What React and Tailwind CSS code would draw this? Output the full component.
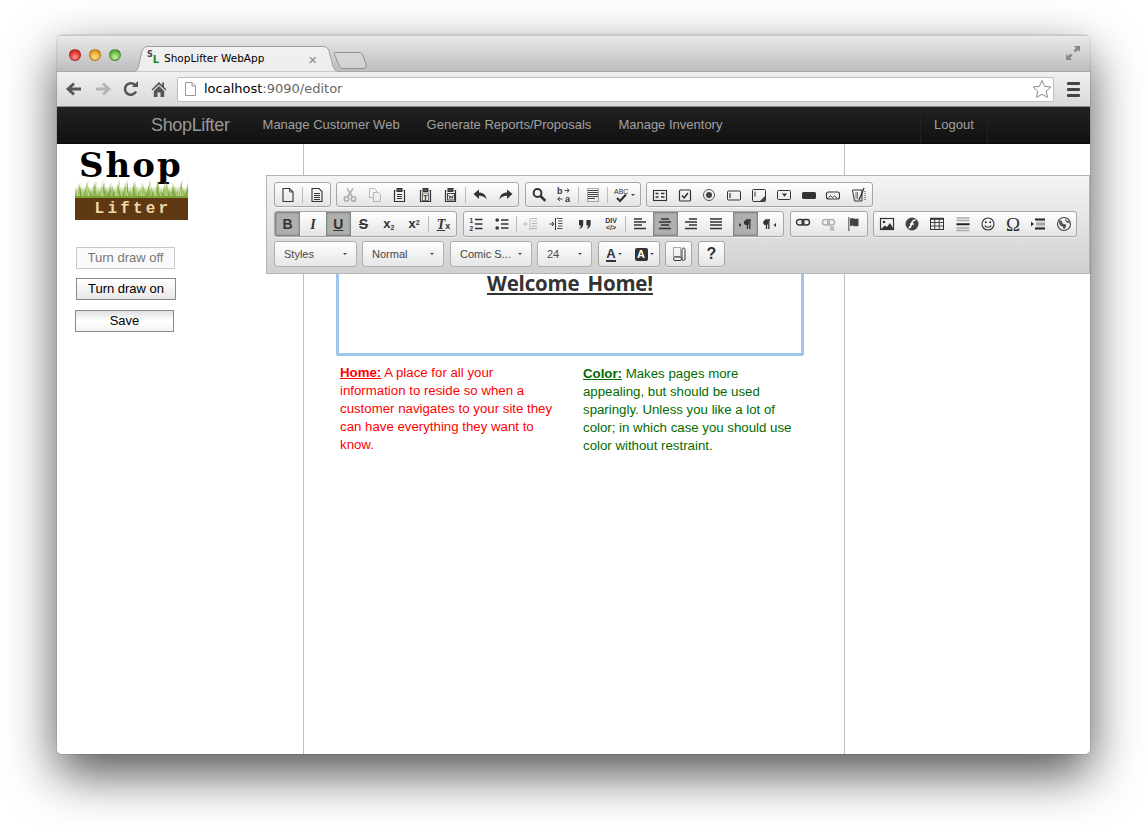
import React from "react";

const I = ({ children, o = 1, w = 16 }) => (
  <svg width={w} height="16" viewBox={`0 0 ${w} 16`} fill="none" stroke="#333" strokeWidth="1" style={{ opacity: o }}>
    {children}
  </svg>
);
const Lines = ({ d, w = 1.4, c = "#333" }) => (
  <path d={d} stroke={c} strokeWidth={w} />
);
const Clip = ({ children }) => (
  <>
    <path d="M3.5 3.5h-1v11h10v-11h-1" strokeWidth="1.2" />
    <rect x="5" y="1.5" width="5" height="3" fill="#555" stroke="#333" />
    {children}
  </>
);
const Arrow = ({ flip }) => (
  <I>
    <path
      d="M1.5 7 L7 2.5 V5.5 C11 5.5 14 7.5 14.5 12.5 C13 9.8 10.5 8.7 7 8.7 V12 Z"
      fill="#333"
      stroke="none"
      transform={flip ? "matrix(-1 0 0 1 16 0)" : undefined}
    />
  </I>
);
const txt = { fontFamily: "'Liberation Sans', sans-serif" };

const icons = {
  newpage: <I><path d="M3 1.5h6.5l3.5 3.5v9.5H3z" strokeWidth="1.1" /><path d="M9.5 1.5V5H13" strokeWidth=".8" /></I>,
  preview: <I><path d="M3 1.5h7l3 3v10H3z" strokeWidth="1.1" /><Lines d="M5 6.5h6M5 8.5h6M5 10.5h6M5 12.5h6" w="1" /></I>,
  cut: <I o={0.35}><circle cx="4.5" cy="12" r="2.2" strokeWidth="1.5" /><circle cx="11.5" cy="12" r="2.2" strokeWidth="1.5" /><path d="M5.5 10L11 1.5M10.5 10L5 1.5" strokeWidth="1.5" /></I>,
  copy: <I o={0.3}><path d="M2.5 1.5h5l2 2v7h-7z" /><path d="M6.5 5.5h5l2 2v7h-7z" fill="#eee" /></I>,
  paste: <I><Clip><Lines d="M5 7.5h5M5 9.5h5M5 11.5h5" w="1.1" /></Clip></I>,
  pastetext: <I><Clip><text x="7.5" y="13" textAnchor="middle" fontSize="8" fontWeight="700" fill="#333" stroke="none" style={txt}>T</text><rect x="4.5" y="6" width="6" height="7.5" strokeWidth=".7" /></Clip></I>,
  pasteword: <I><Clip><rect x="4.5" y="6.5" width="7" height="6.5" strokeWidth=".9" /><path d="M5.8 8l1 3.5 1.2-2.5 1.2 2.5 1-3.5" strokeWidth=".8" /></Clip></I>,
  undo: <Arrow />,
  redo: <Arrow flip />,
  find: <I><circle cx="6.5" cy="6" r="3.9" strokeWidth="2" /><path d="M9.5 9l4.8 4.8" strokeWidth="2.6" /></I>,
  replace: <I><text x="1" y="7" fontSize="9" fontWeight="700" fill="#333" stroke="none" style={txt}>b</text><text x="9" y="14.5" fontSize="9" fontWeight="700" fill="#333" stroke="none" style={txt}>a</text><path d="M8.5 3.5h4.500M11 1.500l2.200 2-2.200 2M1.500 12h5M4 10l-2.200 2 2.200 2" strokeWidth=".9" /></I>,
  selectall: <I><rect x="2.5" y="1.5" width="11" height="13" strokeDasharray="1 1" strokeWidth=".8" /><Lines d="M3 3.5h10M3 5.5h10M3 7.5h10M3 9.5h10M3 11.5h7" w="1.2" c="#444" /></I>,
  spell: (
    <span className="flex items-center gap-[1px]">
      <I><text x="0" y="7" fontSize="7" fill="#333" stroke="none" style={txt}>ABC</text><path d="M3 11l3 3 6-6.5" strokeWidth="2.1" /></I>
      <span className="border-x-[2px] border-t-[2px] border-x-transparent border-t-[#444]" />
    </span>
  ),
  form: <I><rect x="1.5" y="3.5" width="13" height="10" strokeWidth="1.1" /><Lines d="M3.5 6.5h3M9 6.5h3.5M3.5 10h3M9 10h3.5" w="1.6" /></I>,
  checkbox: <I><rect x="2.5" y="3" width="11" height="11" rx="1" strokeWidth="1.2" /><path d="M5 8.5l2.2 2.3L11 6" strokeWidth="1.6" /></I>,
  radio: <I><circle cx="8" cy="8" r="5.5" strokeWidth="1" stroke="#555" /><circle cx="8" cy="8" r="3" fill="#444" stroke="none" /></I>,
  textfield: <I><rect x="1.5" y="4" width="13" height="9" rx="1" /><path d="M4 6v5" strokeWidth="1.2" /></I>,
  textarea: <I><rect x="1.5" y="2.5" width="13" height="12" rx="1" /><path d="M4 4.5v5" /><path d="M14 9v5h-5z" fill="#444" stroke="none" /></I>,
  select: <I><rect x="1.5" y="3.5" width="13" height="9" rx="1" /><path d="M6 6.5h5L8.5 9.8z" fill="#333" stroke="none" /></I>,
  button: <I><rect x="1" y="5" width="14" height="7" rx="1.5" fill="#333" stroke="none" /></I>,
  imagebutton: <I><rect x="1.5" y="5" width="13" height="7" rx="2" strokeWidth="1.1" /><path d="M3.5 11l2-2.5 2 2 2-1.5 2.5 2" strokeWidth=".9" /></I>,
  hidden: <I><path d="M1.5 3h9.5v11H3.500z" strokeWidth="1" /><path d="M5 5v7M6.5 5v7" strokeWidth="1" stroke="#777" /><path d="M8 13l5-12" strokeWidth="1.3" /><path d="M14 4v9" strokeDasharray="1 1" /></I>,
  ol: <I><Lines d="M7 3.500h7.500M7 8h7.500M7 12.500h7.500" w="1.300" /><text x="1.500" y="6.500" fontSize="6.500" fontWeight="700" fill="#333" stroke="none" style={txt}>1</text><text x="1.500" y="14.500" fontSize="6.500" fontWeight="700" fill="#333" stroke="none" style={txt}>2</text></I>,
  ul: <I><Lines d="M7 4h7.500M7 8h7.500M7 12h7.500" w="1.300" /><circle cx="3.200" cy="4" r="1.800" fill="#333" stroke="none" /><circle cx="3.200" cy="12" r="1.800" fill="#333" stroke="none" /></I>,
  outdent: <I o={0.3}><Lines d="M8 2.500h6M9 5h5M9 7.500h5M9 10h5M8 12.500h6M7 2v12" w="1" /><path d="M1 8h4M2.700 6l-2 2 2 2" /></I>,
  indent: <I><Lines d="M9 2.500h5.500M10 5h4.500M10 7.500h4.500M10 10h4.500M9 12.500h5.500" w="1" c="#555" /><path d="M7.500 2v12" /><path d="M1.500 8h4M4 6l2 2-2 2" /></I>,
  quote: <I><path d="M2 4h4.200v4C6.200 10.500 5 12 3 12.800L2.400 12c1-.6 1.500-1.600 1.500-2.600H2zM9.400 4h4.200v4c0 2.500-1.200 4-3.200 4.800L9.800 12c1-.6 1.500-1.600 1.500-2.600H9.400z" fill="#333" stroke="none" /></I>,
  div: <I><text x="8" y="6.800" textAnchor="middle" fontSize="7" fontWeight="700" fill="#333" stroke="none" style={txt}>DIV</text><text x="8" y="14" textAnchor="middle" fontSize="7" fontWeight="700" fill="#333" stroke="none" style={txt}>{"</>"}</text></I>,
  left: <I><Lines d="M2 3h8M2 6h12M2 9h8M2 12.500h12" w="1.600" /></I>,
  center: <I><Lines d="M4 3h8M2 6h12M4 9h8M2 12.500h12" w="1.600" /></I>,
  right: <I><Lines d="M6 3h8M2 6h12M6 9h8M2 12.500h12" w="1.600" /></I>,
  justify: <I><Lines d="M2 3h12M2 6h12M2 9h12M2 12.500h12" w="1.600" /></I>,
  ltr: <I><path d="M2 7l2.500 2L2 11z" fill="#333" stroke="none" /><path d="M9 4h5M10.500 4v9M12.800 4v9" strokeWidth="1.300" /><circle cx="9.500" cy="6.500" r="2.600" fill="#333" stroke="none" /></I>,
  rtl: <I><path d="M14 7l-2.500 2 2.500 2z" fill="#333" stroke="none" /><path d="M3 4h5M4.500 4v9M6.800 4v9" strokeWidth="1.300" /><circle cx="3.800" cy="6.500" r="2.600" fill="#333" stroke="none" /></I>,
  link: <I><rect x="1.500" y="3.500" width="7.500" height="5.500" rx="2.700" strokeWidth="1.400" /><rect x="7" y="3.500" width="7.500" height="5.500" rx="2.700" strokeWidth="1.400" /></I>,
  unlink: <I o={0.35}><rect x="1.500" y="3.500" width="7" height="5.500" rx="2.700" strokeWidth="1.500" /><rect x="6.500" y="3.500" width="7" height="5.500" rx="2.700" strokeWidth="1.500" /><path d="M9 10.500l4 4M13 10.500l-4 4" strokeWidth="1.300" /></I>,
  anchor: <I><path d="M2.800 1v14" strokeWidth="1.400" stroke="#777" /><path d="M4 2.500c3-1 4.500 1 8.500 0v7.500c-4 1-5.500-1-8.500 0z" fill="#444" stroke="none" /></I>,
  image: <I><rect x="1.500" y="2.500" width="13" height="11" strokeWidth="1.200" /><circle cx="5" cy="6" r="1.300" fill="#333" stroke="none" /><path d="M2 13l4-3.500 2 1.500 3-4 3.500 6z" fill="#333" stroke="none" /></I>,
  flash: <I><circle cx="8" cy="8" r="6.500" fill="#444" stroke="none" /><path d="M11.500 4C8.500 4 8 6 7.500 8S6.500 12 4.500 12M6 8h4" stroke="#fff" strokeWidth="1.500" /></I>,
  table: <I><rect x="1.500" y="2.500" width="13" height="11" /><path d="M1.500 2.800h13" strokeWidth="2" /><path d="M1.500 6.500h13M1.500 10h13M5.800 3v10M10.200 3v10" strokeWidth=".9" /></I>,
  hr: <I><Lines d="M1.500 2h13M1.500 4.500h13M1.500 12h13M1.500 14.500h13" w="1.500" c="#aaa" /><Lines d="M1.500 8.200h13" w="2" c="#222" /></I>,
  smiley: <I><circle cx="8" cy="8" r="6" strokeWidth="1.100" /><circle cx="5.800" cy="6.300" r="1" fill="#333" stroke="none" /><circle cx="10.200" cy="6.300" r="1" fill="#333" stroke="none" /><path d="M4.800 9.500c1 2.400 5.400 2.400 6.400 0" strokeWidth="1.100" /></I>,
  pagebreak: <I><path d="M1 5.500l3 2.500-3 2.500z" fill="#333" stroke="none" /><Lines d="M5 3.500h10M5 12.500h10" w="2" c="#222" /><Lines d="M6 8h9" w="1.200" c="#555" /><Lines d="M6 6h9M6 10h9" w=".8" c="#999" /></I>,
  iframe: <I><circle cx="8" cy="8" r="6.500" strokeWidth="1.100" stroke="#444" /><path d="M3.500 4l2.500 1 .500 2.500 3.500 1v2.500l-2 2.500-1.500-3-2.500-1-1-2.500zM10 2.500l.500 2L13 5l.800 2.500-3-1L9 4z" fill="#555" stroke="none" /></I>,
};

const Btn = ({ name, active, w = "w-[25.3px]", children }) => (
  <div
    className={`${w} h-full flex items-center justify-center ${
      active ? "bg-[#aeb0ae] shadow-[inset_0_0_2px_1px_rgba(0,0,0,0.3)]" : ""
    }`}
  >
    {children || icons[name]}
  </div>
);
const Sep = ({ hidden }) => (
  <div className="w-[4px] h-full flex items-center justify-center">
    {!hidden && <div className="w-px h-[16px] bg-[#bcbcbc]" />}
  </div>
);
const groupCls =
  "flex h-full rounded-[3px] border border-[#a6a6a6] bg-gradient-to-b from-white to-[#e4e4e4] overflow-hidden shadow-[0_1px_0_rgba(255,255,255,0.5)]";
const Group = ({ children }) => <div className={groupCls}>{children}</div>;

const Combo = ({ w, label }) => (
  <div className={`${w} h-full flex items-center justify-between pl-[9px] pr-[9px] rounded-[3px] border border-[#b0b0b0] bg-gradient-to-b from-white to-[#e6e6e6] text-[11px] text-[#474747]`}>
    <span>{label}</span>
    <span className="border-x-[2px] border-t-[2px] border-x-transparent border-t-[#444]" />
  </div>
);

const blades = Array.from({ length: 130 }, (_, i) => {
  const x = (i * 113) / 130 + ((i * 7) % 3) - 1;
  const h = 9 + ((i * 37) % 12);
  const lean = ((i * 53) % 9) - 4;
  const color = ["#98b95c", "#b4d07c", "#88aa48", "#c6dd98", "#7da03c"][i % 5];
  return { d: `M${x - 1} 21 Q${x + lean / 3} ${21 - h / 2} ${x + lean} ${21 - h} Q${x + lean / 2 + 0.7} ${21 - h / 2} ${x + 1.2} 21Z`, color };
});

const Logo = () => (
  <div className="relative ml-[18px] w-[113px] h-[76px]">
    <div className="pl-[4px] pt-[4px] text-[34px] leading-[34px] tracking-[2px] font-bold text-black h-[38px]" style={{ fontFamily: "'DejaVu Serif', serif" }}>
      Shop
    </div>
    <svg className="absolute left-0 top-[34px]" width="113" height="21" viewBox="0 0 113 21">
      <defs>
        <linearGradient id="gb" x1="0" y1="0" x2="0" y2="1">
          <stop offset="0" stopColor="#b4d27c" stopOpacity=".2" />
          <stop offset=".6" stopColor="#8fb350" />
          <stop offset="1" stopColor="#6c9a2c" />
        </linearGradient>
      </defs>
      <rect y="9" width="113" height="12" fill="url(#gb)" />
      {blades.map((b, i) => <path key={i} d={b.d} fill={b.color} />)}
      <rect y="18" width="113" height="3" fill="#7aa436" />
    </svg>
    <div className="absolute left-0 right-0 top-[54px] h-[22px] bg-[#5e3913] text-center text-[#f3d7a6] text-[16px] leading-[23px] font-bold tracking-[3.2px] pl-[3px]" style={{ fontFamily: "'Liberation Mono', monospace" }}>
      Lifter
    </div>
  </div>
);

const TabShape = () => (
  <svg width="208" height="26" viewBox="0 0 208 26" className="absolute left-0 top-0">
    <defs>
      <linearGradient id="tg" x1="0" y1="0" x2="0" y2="1">
        <stop offset="0" stopColor="#f1f1f1" />
        <stop offset="1" stopColor="#ececec" />
      </linearGradient>
    </defs>
    <path d="M0 25.500C4 25.500 5 23 6 18L9 5C10 2 12 .500 15 .500H190C193 .500 195 2 196 5L200 20C201 24 203 25.500 208 25.500" fill="url(#tg)" stroke="#9e9e9e" />
  </svg>
);

const Light = ({ cls }) => <div className={`size-[12px] rounded-full border border-black/25 ${cls}`} />;

export default function App() {
  return (
    <div className="w-[1147px] h-[833px] bg-white pl-[57px] pt-[35px] overflow-hidden" style={{ fontFamily: "'Liberation Sans', Arial, sans-serif" }}>
      <div className="relative w-[1033px] h-[719px] rounded-[5px] shadow-[0_20px_50px_rgba(0,0,0,0.68),0_0_1px_rgba(0,0,0,0.8)]">
        <div className="w-full h-full rounded-[5px] overflow-hidden flex flex-col bg-white relative">
          {/* tab strip */}
          <div className="h-[36px] shrink-0 relative bg-gradient-to-b from-[#e9e9e9] to-[#bdbdbd] border-t border-[#c8c8c8] flex">
            <div className="flex items-center gap-[8px] pl-[12px] h-[37px]">
              <Light cls="bg-[radial-gradient(circle_at_50%_70%,#ff9a96,#e5342c_60%,#b0201a)]" />
              <Light cls="bg-[radial-gradient(circle_at_50%_70%,#ffe08a,#eda52b_60%,#b97a14)]" />
              <Light cls="bg-[radial-gradient(circle_at_50%_70%,#c6f0a0,#69b644_60%,#3f8a28)]" />
            </div>
            <svg className="absolute left-[276px] top-[15px]" width="36" height="20" viewBox="0 0 36 20">
              <path d="M2 1.500H26C28 1.500 29 2.500 30 5L33 13C34 16 32.500 17.500 30 17.500H10C8 17.500 7 16.500 6 14L2 5C1 3 1 1.500 2 1.500Z" fill="#dcdcdc" fillOpacity=".6" stroke="#8f8f8f" />
            </svg>
            <div className="absolute left-[76px] top-[10px] w-[208px] h-[26px]">
              <TabShape />
              <div className="relative h-full flex items-center pl-[14px] pr-[24px]">
                <span className="text-[10px] leading-[10px] font-bold w-[16px] flex" style={{ fontFamily: "'DejaVu Sans', sans-serif" }}>
                  <span className="text-[#444] text-[8px] -mt-[3px]">S</span>
                  <span className="text-[#1d8a1d] mt-[2px]">L</span>
                </span>
                <span className="ml-[1px] text-[10.5px] text-black" style={{ fontFamily: "'DejaVu Sans', sans-serif" }}>ShopLifter WebApp</span>
                <span className="ml-auto text-[15px] leading-none text-[#888]">×</span>
              </div>
            </div>
            <svg className="absolute right-[9px] top-[9px]" width="16" height="16" viewBox="0 0 16 16">
              <path d="M9 1h6v6l-2-2-2.500 2.500-2-2L11 3zM7 15H1V9l2 2 2.500-2.500 2 2L5 13z" fill="#888" />
            </svg>
          </div>
          {/* address toolbar */}
          <div className="h-[36px] shrink-0 bg-gradient-to-b from-[#f0f0f0] to-[#d9d9d9] border-t border-[#a8a8a8] border-b border-b-[#8a8a8a] flex items-center pl-[8px] pr-[10px]">
            <svg width="20" height="16" viewBox="0 0 20 16" className="mr-[8px] shrink-0">
              <path d="M16 8H4M9 2.500L3 8l6 5.500" fill="none" stroke="#555" strokeWidth="2.800" />
            </svg>
            <svg width="20" height="16" viewBox="0 0 20 16" className="mr-[9px] shrink-0">
              <path d="M3 8h12M10 2.500L16 8l-6 5.500" fill="none" stroke="#b4b4b4" strokeWidth="2.800" />
            </svg>
            <svg width="18" height="18" viewBox="0 0 18 18" className="mr-[11px] shrink-0">
              <path d="M14 11.500A5.800 5.800 0 1 1 13 5" fill="none" stroke="#555" strokeWidth="2.600" />
              <path d="M10 7h6V1z" fill="#555" />
            </svg>
            <svg width="16" height="18" viewBox="0 0 16 18" className="mr-[10px] shrink-0">
              <path d="M8 2L0.500 9.500l1 1L8 4.500l6.500 6 1-1L13 7V2.500h-1.800v2.700zM2.800 11L8 6l5.200 5v6H9.500v-4.500h-3V17H2.800z" fill="#555" />
            </svg>
            <div className="flex-1 h-[25px] bg-white border border-[#bdbdbd] rounded-[2px] flex items-center pl-[7px] pr-[1px]">
              <svg width="11" height="14" viewBox="0 0 11 14" className="shrink-0">
                <path d="M.500 .500H7L10.500 4V13.500H.500z M7 .500V4H10.500" fill="#fff" stroke="#999" />
              </svg>
              <span className="ml-[8px] text-[13px] text-black" style={{ fontFamily: "'DejaVu Sans', sans-serif" }}>
                localhost<span className="text-[#666]">:9090/editor</span>
              </span>
              <svg width="20" height="20" viewBox="0 0 20 20" className="ml-auto shrink-0">
                <path d="M10 1.500l2.600 5.800 6.300.700-4.700 4.200 1.300 6.200L10 15.300l-5.500 3.100 1.300-6.200L1.100 8l6.300-.700z" fill="#fff" stroke="#888" />
              </svg>
            </div>
            <div className="ml-[13px] flex flex-col gap-[3px] w-[13px] shrink-0">
              <div className="h-[3px] rounded-[1px] bg-[#444]" />
              <div className="h-[3px] rounded-[1px] bg-[#444]" />
              <div className="h-[3px] rounded-[1px] bg-[#444]" />
            </div>
          </div>
          {/* navbar */}
          <div className="h-[37px] shrink-0 bg-gradient-to-b from-[#222] to-[#111] border-b border-[#0a0a0a] flex items-center pl-[94px] pr-[102px] text-[#a0a0a0] text-[13px]">
            <span className="text-[#999] text-[18px] tracking-[-0.35px] mr-[33px]">ShopLifter</span>
            <div className="flex gap-[27px]">
              <span>Manage Customer Web</span>
              <span>Generate Reports/Proposals</span>
              <span>Manage Inventory</span>
            </div>
            <div className="ml-auto h-full w-[68px] flex items-center justify-center border-x border-[#222]">Logout</div>
          </div>
          {/* content */}
          <div className="flex-1 flex min-h-0 bg-white">
            <div className="w-[247px] shrink-0 border-r border-[#bfbfbf]">
              <Logo />
              <div className="flex flex-col text-[13px] text-black mt-[27px]">
                <div className="ml-[19px] w-[99px] h-[22px] border border-[#c8c8c8] bg-[#fafafa] text-[#777] flex items-center justify-center">Turn draw off</div>
                <div className="ml-[19px] mt-[9px] w-[100px] h-[22px] border border-[#8a8a8a] bg-gradient-to-b from-white to-[#e8e8e8] flex items-center justify-center">Turn draw on</div>
                <div className="ml-[18px] mt-[10px] w-[99px] h-[22px] border border-[#8a8a8a] bg-gradient-to-b from-[#e0e0e0] via-white to-[#f4f4f4] flex items-center justify-center">Save</div>
              </div>
            </div>
            <div className="w-[541px] shrink-0 border-r border-[#bfbfbf] pl-[32px]">
              <div className="mt-[36px] w-[468px] h-[176px] border-[3px] border-[#9dc4ea] rounded-[2px] text-center pt-[87px]">
                <span className="text-[20.500px] leading-[26px] font-bold text-[#333] underline tracking-[-0.2px] [word-spacing:3px]" style={{ fontFamily: "'Open Sans', sans-serif" }}>Welcome Home!</span>
              </div>
              <div className="flex text-[13.250px] leading-[18px]">
                <p className="w-[247px] pl-[4px] pr-[25px] mt-[8px] text-[#ff0000]">
                  <b className="underline">Home:</b> A place for all your information to reside so when a customer navigates to your site they can have everything they want to know.
                </p>
                <p className="w-[212px] mt-[9px] text-[#006b00]">
                  <b className="underline">Color:</b> Makes pages more appealing, but should be used sparingly. Unless you like a lot of color; in which case you should use color without restraint.
                </p>
              </div>
            </div>
            <div className="flex-1" />
          </div>
          {/* floating editor toolbar */}
          <div className="absolute left-[209px] top-[140px] right-0 h-[99px] bg-gradient-to-b from-[#f4f4f4] to-[#cfd1cf] border border-[#b4b4b4] pl-[7px] pt-[6px] flex flex-col gap-[4px]">
            <div className="flex gap-[5.600px] h-[25px]">
              <Group><Btn name="newpage" /><Sep /><Btn name="preview" /></Group>
              <Group>
                <Btn name="cut" /><Btn name="copy" /><Btn name="paste" /><Btn name="pastetext" /><Btn name="pasteword" /><Sep /><Btn name="undo" /><Btn name="redo" />
              </Group>
              <Group>
                <Btn name="find" /><Btn name="replace" /><Sep /><Btn name="selectall" /><Sep /><Btn name="spell" w="w-[30px]" />
              </Group>
              <Group>
                <Btn name="form" w="w-[24.800px]" /><Btn name="checkbox" w="w-[24.800px]" /><Btn name="radio" w="w-[24.800px]" /><Btn name="textfield" w="w-[24.800px]" /><Btn name="textarea" w="w-[24.800px]" /><Btn name="select" w="w-[24.800px]" /><Btn name="button" w="w-[24.800px]" /><Btn name="imagebutton" w="w-[24.800px]" /><Btn name="hidden" w="w-[25.800px]" />
              </Group>
            </div>
            <div className="flex gap-[5.500px] h-[26px]">
              <Group>
                <Btn active><span className="text-[14px] font-bold text-[#333]">B</span></Btn>
                <Btn><span className="text-[14px] font-bold italic text-[#333]" style={{ fontFamily: "'Liberation Serif', serif" }}>I</span></Btn>
                <Btn active><span className="text-[14px] font-bold underline text-[#333]">U</span></Btn>
                <Btn><span className="text-[14px] font-bold line-through text-[#333]">S</span></Btn>
                <Btn><span className="text-[13px] font-bold text-[#333]">x<sub className="text-[7px]">2</sub></span></Btn>
                <Btn><span className="text-[13px] font-bold text-[#333]">x<sup className="text-[7px]">2</sup></span></Btn>
                <Sep />
                <Btn><span className="text-[14px] font-bold italic underline text-[#333]" style={{ fontFamily: "'Liberation Serif', serif" }}>T<span className="not-italic text-[9px] inline-block no-underline" style={txt}>x</span></span></Btn>
              </Group>
              <Group>
                <Btn name="ol" /><Btn name="ul" /><Sep /><Btn name="outdent" /><Btn name="indent" /><Sep hidden /><Btn name="quote" /><Btn name="div" /><Sep /><Btn name="left" /><Btn name="center" active /><Btn name="right" /><Btn name="justify" /><Sep hidden /><Btn name="ltr" active /><Btn name="rtl" />
              </Group>
              <Group><Btn name="link" /><Btn name="unlink" /><Btn name="anchor" /></Group>
              <Group>
                <Btn name="image" /><Btn name="flash" /><Btn name="table" /><Btn name="hr" /><Btn name="smiley" />
                <Btn><span className="text-[19px] leading-[19px] text-[#333]" style={{ fontFamily: "'Liberation Serif', serif" }}>Ω</span></Btn>
                <Btn name="pagebreak" /><Btn name="iframe" />
              </Group>
            </div>
            <div className="flex h-[26px]">
              <Combo w="w-[83px]" label="Styles" />
              <div className="w-[5px]" />
              <Combo w="w-[82px]" label="Normal" />
              <div className="w-[6px]" />
              <Combo w="w-[82px]" label="Comic S..." />
              <div className="w-[5px]" />
              <Combo w="w-[55px]" label="24" />
              <div className="w-[6px]" />
              <Group>
                <Btn w="w-[30px]">
                  <span className="flex items-center gap-[2px]">
                    <span className="text-[13px] leading-[13px] font-bold text-[#333] border-b-2 border-[#333]">A</span>
                    <span className="border-x-[2px] border-t-[2px] border-x-transparent border-t-[#444]" />
                  </span>
                </Btn>
                <Btn w="w-[30px]">
                  <span className="flex items-center gap-[2px]">
                    <span className="text-[11px] leading-[13px] w-[13px] text-center font-bold text-white bg-[#333] rounded-[2px]">A</span>
                    <span className="border-x-[2px] border-t-[2px] border-x-transparent border-t-[#444]" />
                  </span>
                </Btn>
              </Group>
              <div className="w-[5px]" />
              <Group>
                <Btn w="w-[25px]">
                  <I><rect x="2.500" y="1.500" width="7" height="9" strokeDasharray="1 1" strokeWidth=".8" /><rect x="2.500" y="11" width="8" height="3.500" rx="1.500" /><rect x="11" y="2" width="3" height="12.500" rx="1.500" /></I>
                </Btn>
              </Group>
              <div className="w-[6px]" />
              <Group>
                <Btn w="w-[25px]"><span className="text-[16px] font-bold text-[#333]">?</span></Btn>
              </Group>
            </div>
          </div>
        </div>
      </div>
    </div>
  );
}
